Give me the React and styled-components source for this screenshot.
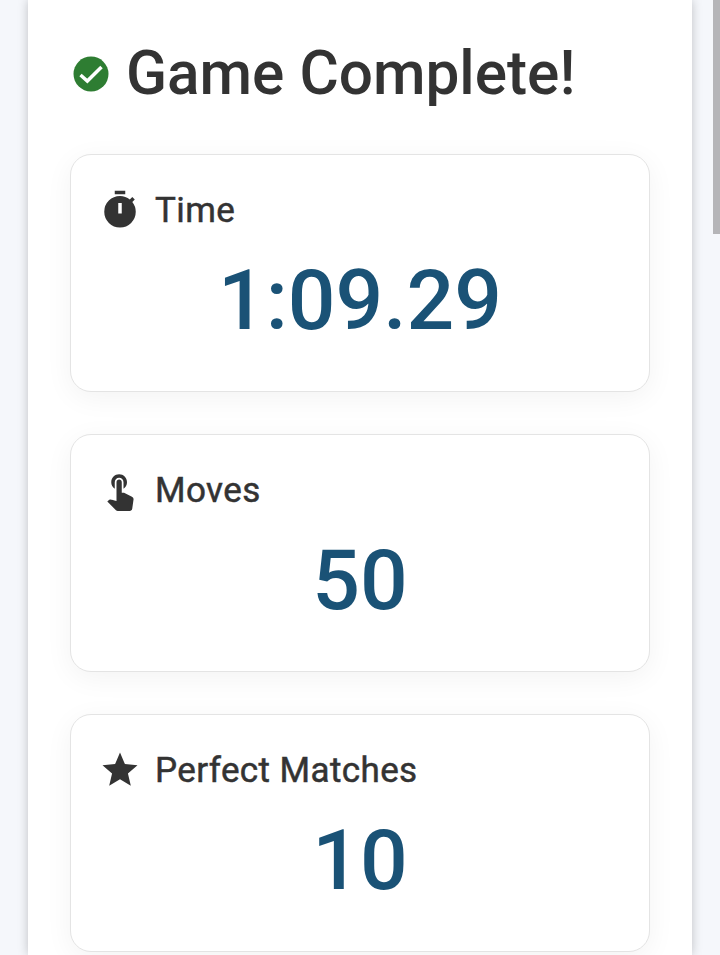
import styled, { createGlobalStyle } from "styled-components";
import { MdStar, MdTouchApp } from "react-icons/md";

const GlobalStyle = createGlobalStyle`
  html, body {
    margin: 0;
    height: 955px;
    overflow: hidden;
    background: #f5f7fb;
  }
`;

const Panel = styled.main`
  box-sizing: border-box;
  height: 955px;
  margin: 0 28px;
  padding: 39px 42px 0;
  background: #fff;
  box-shadow: 0 0 10px rgba(0, 0, 0, 0.22);
  font-family: Roboto, "Liberation Sans", sans-serif;
  color: #333;
`;

const Title = styled.h1`
  display: flex;
  align-items: center;
  gap: 14px;
  margin: 0 0 45px;
  font-size: 60.3px;
  line-height: 70px;
  font-weight: 500;
  white-space: nowrap;
`;

const DoneIcon = styled.svg`
  flex: none;
  width: 42px;
  height: 42px;
`;

const Stats = styled.div`
  display: flex;
  flex-direction: column;
  gap: 42px;
`;

const Card = styled.section`
  box-sizing: border-box;
  height: 238px;
  padding: 34px 28px;
  border: 1px solid #e4e4e4;
  border-radius: 21px;
  background: #fff;
  box-shadow: 0 6px 28px rgba(0, 0, 0, 0.05);
`;

const Label = styled.div`
  display: flex;
  align-items: center;
  gap: 14px;
  height: 42px;
  font-size: 35px;
  font-weight: 400;
  letter-spacing: 0.4px;
  -webkit-text-stroke: 0.5px #333;
`;

const IconSlot = styled.span`
  display: flex;
  justify-content: center;
  align-items: center;
  width: 42px;
  height: 42px;
  font-size: 42px;
`;

const TimerIcon = styled.svg`
  width: 42px;
  height: 42px;
  fill: currentColor;
`;

const Value = styled.div`
  margin-top: 21px;
  text-align: center;
  font-size: 84px;
  line-height: 98px;
  font-weight: 500;
  color: #1a5276;
`;

const Scrollbar = styled.div`
  position: fixed;
  top: 0;
  right: 0;
  width: 7px;
  height: 234px;
  background: #b5b5b8;
`;

function Timer() {
  return (
    <TimerIcon viewBox="0 0 24 24">
      <path
        fillRule="evenodd"
        d="M9 3V1h6v2H9Zm3 19a9 9 0 1 1 0-18c2.12 0 4.07.74 5.61 1.97l1.42-1.42 1.41 1.41-1.41 1.42A8.96 8.96 0 0 1 21 13a9 9 0 0 1-9 9Zm-1-8h2V8h-2v6Z"
      />
    </TimerIcon>
  );
}

const stats = [
  { label: "Time", value: "1:09.29", Icon: Timer },
  { label: "Moves", value: "50", Icon: MdTouchApp },
  { label: "Perfect Matches", value: "10", Icon: MdStar },
];

export default function App() {
  return (
    <>
      <GlobalStyle />
      <Panel>
        <Title>
          <DoneIcon viewBox="0 0 24 24">
            <circle cx="12" cy="12" r="10" fill="#2e7d32" />
            <path d="M6 12.6l3.9 3.4L18 8" fill="none" stroke="#fff" strokeWidth="2" />
          </DoneIcon>
          Game Complete!
        </Title>
        <Stats>
          {stats.map(({ label, value, Icon }) => (
            <Card key={label}>
              <Label>
                <IconSlot>
                  <Icon />
                </IconSlot>
                {label}
              </Label>
              <Value>{value}</Value>
            </Card>
          ))}
        </Stats>
      </Panel>
      <Scrollbar />
    </>
  );
}
